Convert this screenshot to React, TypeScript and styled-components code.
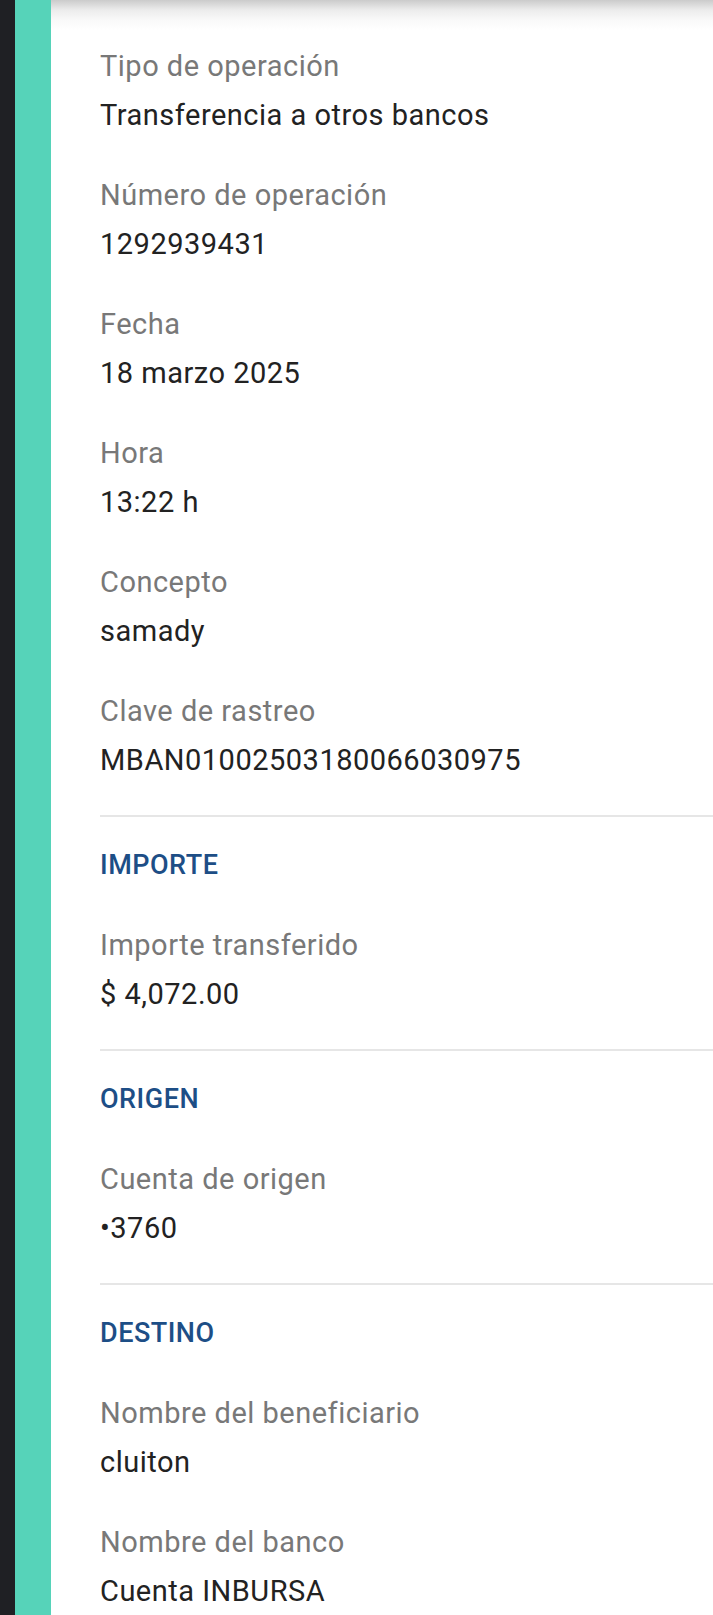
import styled, { createGlobalStyle } from 'styled-components';

const GlobalStyle = createGlobalStyle`
  html, body {
    margin: 0;
    padding: 0;
    background: #ffffff;
    overflow: hidden;
  }
  body {
    font-family: Roboto, "Noto Sans", "Liberation Sans", sans-serif;
  }
`;

const Screen = styled.div`
  display: flex;
  width: 713px;
  height: 1615px;
  overflow: hidden;
`;

const EdgeStrip = styled.div`
  width: 15px;
  flex-shrink: 0;
  background: #1f2024;
`;

const AccentStrip = styled.div`
  width: 36px;
  flex-shrink: 0;
  background: #56d3b9;
`;

const Content = styled.main`
  flex: 1;
  padding: 42px 0 0 49px;
  background: linear-gradient(to bottom, #cbcbcb 0px, #ececec 10px, #f9f9f9 20px, #ffffff 30px);
`;

const Field = styled.div`
  display: flex;
  flex-direction: column;
  & + & {
    margin-top: 31px;
  }
`;

const Label = styled.span`
  font-size: 29px;
  line-height: 49px;
  letter-spacing: 0.5px;
  color: #787878;
  white-space: nowrap;
`;

const Value = styled.span`
  font-size: 29px;
  line-height: 49px;
  letter-spacing: 0.5px;
  color: #222222;
  white-space: nowrap;
`;

const Divider = styled.hr`
  border: 0;
  height: 2px;
  margin: 30px 0 0;
  background: #e6e6e6;
`;

const SectionTitle = styled.h2`
  margin: 28px 0 36px;
  font-size: 27px;
  line-height: 40px;
  font-weight: 500;
  color: #1d4e86;
  letter-spacing: 0.5px;
`;

type Item = { label: string; value: string };

const general: Item[] = [
  { label: 'Tipo de operación', value: 'Transferencia a otros bancos' },
  { label: 'Número de operación', value: '1292939431' },
  { label: 'Fecha', value: '18 marzo 2025' },
  { label: 'Hora', value: '13:22 h' },
  { label: 'Concepto', value: 'samady' },
  { label: 'Clave de rastreo', value: 'MBAN01002503180066030975' },
];

const sections: { title: string; items: Item[] }[] = [
  { title: 'IMPORTE', items: [{ label: 'Importe transferido', value: '$ 4,072.00' }] },
  { title: 'ORIGEN', items: [{ label: 'Cuenta de origen', value: '•3760' }] },
  {
    title: 'DESTINO',
    items: [
      { label: 'Nombre del beneficiario', value: 'cluiton' },
      { label: 'Nombre del banco', value: 'Cuenta INBURSA' },
    ],
  },
];

const Fields = ({ items }: { items: Item[] }) => (
  <>
    {items.map((it) => (
      <Field key={it.label}>
        <Label>{it.label}</Label>
        <Value>{it.value}</Value>
      </Field>
    ))}
  </>
);

export default function App() {
  return (
    <>
      <GlobalStyle />
      <Screen>
        <EdgeStrip />
        <AccentStrip />
        <Content>
          <Fields items={general} />
          {sections.map((s) => (
            <section key={s.title}>
              <Divider />
              <SectionTitle>{s.title}</SectionTitle>
              <Fields items={s.items} />
            </section>
          ))}
        </Content>
      </Screen>
    </>
  );
}
